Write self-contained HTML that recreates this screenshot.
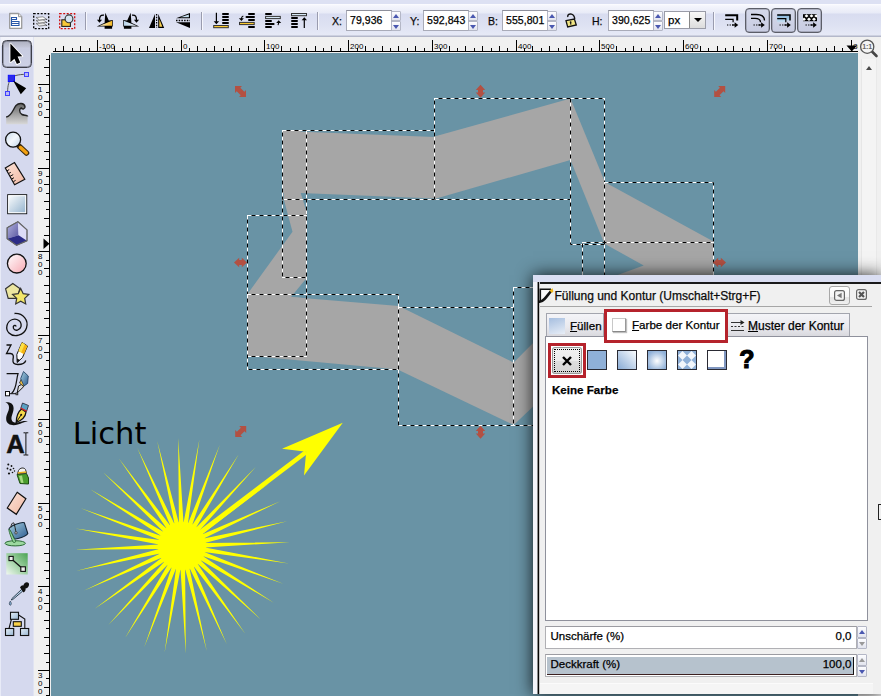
<!DOCTYPE html>
<html><head><meta charset="utf-8"><title>Inkscape</title>
<style>
html,body{margin:0;padding:0}
body{width:881px;height:696px;position:relative;overflow:hidden;background:#f0f0f0;font-family:"Liberation Sans",sans-serif;font-size:11px;color:#000;-webkit-text-stroke:.25px #000}
body>*{position:absolute}
#cv{left:0;top:0}
#topstrip{left:0;top:0;width:881px;height:4px;background:#dde1f3}
#toolbar{left:0;top:4px;width:881px;height:33px;background:linear-gradient(#fdfdff 0,#f4f5fc 2px,#e8ebf7 9px,#d8dcf0 10px,#dde1f2 20px,#e6e9f6 31px,#b4b8ca 32px,#b4b8ca 33px)}
.sep{top:12px;width:1px;height:18px;background:#9a9cae;box-shadow:1px 0 0 #f6f7fd}
.tlabel{top:12px;height:18px;line-height:18px;font-size:10.5px;color:#111}
.entry{top:10px;width:43px;height:19px;line-height:19px;border:1px solid #a9abb8;border-top-color:#8e909c;background:#fff;font-size:10.5px;padding-left:3px;box-sizing:content-box;width:41px;letter-spacing:0.05px}
.spin{border:0}
.spin i{position:absolute;left:0;width:100%;height:50%;box-sizing:border-box;border:1px solid #b4b7c6;background:linear-gradient(#fdfdff,#e2e4ee);border-radius:1px}
.spin i.up{top:0}.spin i.dn{bottom:0}
.spin i:after{content:"";position:absolute;left:50%;top:50%;margin-left:-3px;border:3px solid transparent}
.spin i.up:after{border-bottom:4px solid #4a58b0;margin-top:-5px}
.spin i.dn:after{border-top:4px solid #4a58b0;margin-top:-1px}
.combo{left:664px;top:11px;width:42px;height:18px;border:1px solid #9a9ca8;background:#fff;box-sizing:border-box}
.combo span{position:absolute;left:3px;top:0;line-height:16px;font-size:11.5px}
.combo b{position:absolute;right:0;top:0;width:15px;height:16px;background:linear-gradient(#f8f8f8,#dcdcdc);border-left:1px solid #888}
.combo b:after{content:"";position:absolute;left:4px;top:6px;border:4px solid transparent;border-top:4px solid #000;border-bottom:0}
.tbtn{top:8px;width:25px;height:25px;border:1px solid #5c5e68;box-shadow:inset 0 0 0 .5px rgba(60,60,70,.5);border-radius:4px;background:linear-gradient(#d4d8ea,#c9cde2);box-sizing:border-box}
#toolbox{left:0;top:37px;width:34px;height:659px;background:linear-gradient(#f4f5fb 0,#eceef8 9px,#d5d9ee 9.5px);box-shadow:inset 1px 0 0 #e8ebf7,inset -1px 0 0 #e0e3f2}
#selbtn{left:2px;top:40px;width:30px;height:28px;box-sizing:border-box;border:1px solid #3e3f48;box-shadow:inset 0 0 0 1px rgba(70,72,84,.4);border-radius:4.5px;background:linear-gradient(#adb0c0 0,#c2c5d6 6px,#c8cce0 7px,#cdd1e5 100%)}
#vscroll{left:858px;top:57px;width:23px;height:220px;background:#f0f0f0}
#vscroll:before{content:"";position:absolute;left:4px;top:2px;width:14px;height:218px;background:#f4f4f4;box-shadow:-1px 0 0 #e6e6e6,1px 0 0 #e9e9e9}
#vscroll i{position:absolute;left:7.5px;top:8.5px;border:3.5px solid transparent;border-bottom:4px solid #4a4a4a;border-top:0}
#zoom11{left:858px;top:37px}
/* dialog */
#dshadow{left:533px;top:275px;width:348px;height:419px;box-shadow:0 0 16px 0 rgba(0,0,0,.85)}
#dlg{left:533px;top:275px;width:348px;height:419px;background:#f0f0f0;overflow:hidden;font-size:12px}
#dlg>*{position:absolute}
#dtop{left:0;top:0;width:348px;height:7px;background:#dadef2}
#dline{left:5px;top:7px;width:343px;height:2px;background:#1a1a1a}
#dleft{left:0;top:7px;width:5px;height:412px;background:#f3f4fa}
#dvline{left:4px;top:7px;width:3px;height:412px;background:linear-gradient(90deg,#8c8c8c 0,#8c8c8c 33.3%,#050505 33.3%,#050505 66.6%,#c4c4c4 66.6%)}
#dicon{left:6px;top:12.5px}
#dtitle{left:21.5px;top:11.5px;height:18px;line-height:18px;font-size:12px;white-space:nowrap;color:#111}
#dcollapse{left:296px;top:10.500px;width:21px;height:19px;box-sizing:border-box;border:1px solid #a8a8a8;border-radius:3px;background:linear-gradient(#fff,#f6f6f6 60%,#e4e4e4 62%,#f0f0f0)}
#dcollapse svg{position:absolute;left:4px;top:3px}
#dclose{left:323px;top:14px}
#dunder{left:7px;top:31px;width:332px;height:1px;background:#a6a6a6}
#tab1,#tab3{top:38px;height:23px;box-sizing:border-box;border:1px solid #a3a5ae;border-bottom:0;background:linear-gradient(#f4f4f8,#e9e9ee 60%,#d9d9de);font-size:11.6px;white-space:nowrap}
#tab1{left:13px;width:58px}
#tab3{left:194px;width:123px}
#tab1 span,#tab3 span,#tab2 span{position:absolute;top:4px;line-height:16px}
#tab1 span{left:23px}
#tab1 i{position:absolute;left:2px;top:3.5px;width:16px;height:16px;background:linear-gradient(160deg,#a6bedf,#e8eef7)}
#tab3 svg{position:absolute;left:2px;top:5px}
#tab3 span{left:20px;font-size:12px}
#panel{left:11.500px;top:61px;width:323px;height:285px;box-sizing:border-box;border:1px solid #8f919c;background:#fff}
#tab2{left:70.500px;top:33.500px;width:124px;height:34.500px;box-sizing:border-box;border:3px solid #b5232c;background:#fff;font-size:11.6px;white-space:nowrap}
#tab2 span{left:25.5px;top:5.5px}
#tab2 i{position:absolute;left:5px;top:6px;width:14px;height:14px;background:#fff;border:1px solid #c8c8c8;border-right-color:#999;border-bottom-color:#888;box-sizing:border-box;box-shadow:1px 1px 1px rgba(0,0,0,.25)}
#xbox{left:14.500px;top:67.500px;width:38.500px;height:35px;box-sizing:border-box;border:3px solid #b5232c;background:#fff}
#xbtn{position:absolute;left:1px;top:1px;width:30.5px;height:27px;border-radius:3px;background:linear-gradient(#f2f2f2,#ebebeb 50%,#dedede 52%,#d4d4d4);box-shadow:0 0 0 1px #9a9a9a inset}
#xfocus{position:absolute;left:2px;top:2px;right:2px;bottom:2px;border:1px dotted #000}
#xbtn svg{position:absolute;left:9.500px;top:8px}
.sw{top:75px;width:20px;height:20px;box-sizing:border-box;border:1px solid #2a2a33}
#qm{left:205px;top:69px;width:18px;height:30px;line-height:30px;font-size:25px;font-weight:bold;text-align:center;font-family:"Liberation Sans",sans-serif;-webkit-text-stroke:1.1px #000}
#keine{left:19px;top:107px;line-height:16px;font-size:11.6px;font-weight:bold;white-space:nowrap}
.sbox{left:11.500px;width:312px;height:23px;box-sizing:border-box;border:1px solid #b0b0b4;border-top-color:#9c9ca2;background:#fff;font-size:11.5px}
.sbox span{position:absolute;left:5px;top:1px;line-height:16px;white-space:nowrap}
.sbox em{position:absolute;right:4px;top:1px;line-height:16px;font-style:normal}
#dfill{position:absolute;left:1px;top:1.500px;width:306px;height:17px;background:#b6c2cd;border-bottom:1.5px solid #3a1f1f;border-right:1.5px solid #111}
.spin i.g:after{border-top-color:#999;border-bottom-color:#999}
.spin i.up.g:after{border-top-color:transparent}
.spin i.dn.g:after{border-bottom-color:transparent}
#dbot{left:6.500px;top:408px;width:333px;height:11px;background:#f5f5f5;border-top:1px solid #fbfbfb}
#brk{left:878px;top:504px;width:5px;height:16px;box-sizing:border-box;border:1.5px solid #222;border-right:0;border-radius:1px 0 0 1px}

</style></head>
<body>
<svg id="cv" width="881" height="696" viewBox="0 0 881 696">
<rect x="51" y="53" width="807" height="643" fill="#6993a5"/>
<polygon points="283,131 300.7,131 300.7,193 306,210 306,278.7 291,297 247.5,294 292.5,231.7 283.7,199" fill="#a6a6a6"/>
<polygon points="283,131 434.5,137 434.5,198.5 300.7,193 283,193" fill="#a6a6a6"/>
<polygon points="434.5,136.5 570.5,98.5 570.5,160 434.5,199" fill="#a6a6a6"/>
<polygon points="570.5,98.5 604.5,181 604.5,244 570.5,160" fill="#a6a6a6"/>
<polygon points="604.5,182 713.5,241.5 713.5,300 620,300 617.5,275 643.7,265.5 604.5,243.7" fill="#a6a6a6"/>
<polygon points="247.5,294.5 289,294.5 291,297 306.5,298.3 306.5,356.5 247.5,356.5" fill="#a6a6a6"/>
<polygon points="291,297 398.7,306 398.7,369.5 262,357 262,297" fill="#a6a6a6"/>
<polygon points="398.7,306 513.7,362.5 513.7,425 398.7,370" fill="#a6a6a6"/>
<polygon points="513.7,362.5 560,316 560,381 513.7,425" fill="#a6a6a6"/>
<rect x="282.5" y="130.5" width="24.0" height="147.0" fill="none" stroke="#fff" stroke-width="1"/><rect x="282.5" y="130.5" width="24.0" height="147.0" fill="none" stroke="#000" stroke-width="1" stroke-dasharray="4 4" stroke-dashoffset="4"/>
<rect x="282.5" y="130.5" width="152.0" height="69.0" fill="none" stroke="#fff" stroke-width="1"/><rect x="282.5" y="130.5" width="152.0" height="69.0" fill="none" stroke="#000" stroke-width="1" stroke-dasharray="4 4" stroke-dashoffset="4"/>
<rect x="434.5" y="98.5" width="136.0" height="101.0" fill="none" stroke="#fff" stroke-width="1"/><rect x="434.5" y="98.5" width="136.0" height="101.0" fill="none" stroke="#000" stroke-width="1" stroke-dasharray="4 4" stroke-dashoffset="4"/>
<rect x="570.5" y="98.5" width="34.0" height="146.0" fill="none" stroke="#fff" stroke-width="1"/><rect x="570.5" y="98.5" width="34.0" height="146.0" fill="none" stroke="#000" stroke-width="1" stroke-dasharray="4 4" stroke-dashoffset="4"/>
<rect x="604.5" y="182.5" width="109.0" height="60.0" fill="none" stroke="#fff" stroke-width="1"/><rect x="604.5" y="182.5" width="109.0" height="60.0" fill="none" stroke="#000" stroke-width="1" stroke-dasharray="4 4" stroke-dashoffset="4"/>
<rect x="582.5" y="242.5" width="22.0" height="57.5" fill="none" stroke="#fff" stroke-width="1"/><rect x="582.5" y="242.5" width="22.0" height="57.5" fill="none" stroke="#000" stroke-width="1" stroke-dasharray="4 4" stroke-dashoffset="4"/>
<rect x="582.5" y="242.5" width="131.0" height="57.5" fill="none" stroke="#fff" stroke-width="1"/><rect x="582.5" y="242.5" width="131.0" height="57.5" fill="none" stroke="#000" stroke-width="1" stroke-dasharray="4 4" stroke-dashoffset="4"/>
<rect x="247.5" y="215.5" width="59.0" height="79.0" fill="none" stroke="#fff" stroke-width="1"/><rect x="247.5" y="215.5" width="59.0" height="79.0" fill="none" stroke="#000" stroke-width="1" stroke-dasharray="4 4" stroke-dashoffset="4"/>
<rect x="247.5" y="294.5" width="59.0" height="62.0" fill="none" stroke="#fff" stroke-width="1"/><rect x="247.5" y="294.5" width="59.0" height="62.0" fill="none" stroke="#000" stroke-width="1" stroke-dasharray="4 4" stroke-dashoffset="4"/>
<rect x="247.5" y="294.5" width="151.0" height="75.0" fill="none" stroke="#fff" stroke-width="1"/><rect x="247.5" y="294.5" width="151.0" height="75.0" fill="none" stroke="#000" stroke-width="1" stroke-dasharray="4 4" stroke-dashoffset="4"/>
<rect x="398.5" y="307.5" width="115.0" height="118.0" fill="none" stroke="#fff" stroke-width="1"/><rect x="398.5" y="307.5" width="115.0" height="118.0" fill="none" stroke="#000" stroke-width="1" stroke-dasharray="4 4" stroke-dashoffset="4"/>
<rect x="513.5" y="287.5" width="200.0" height="138.0" fill="none" stroke="#fff" stroke-width="1"/><rect x="513.5" y="287.5" width="200.0" height="138.0" fill="none" stroke="#000" stroke-width="1" stroke-dasharray="4 4" stroke-dashoffset="4"/>
<polygon points="289.9,542.2 204.8,542.9 287.1,521.2 203.8,538.6 280.3,501.2 201.9,534.5 269.6,482.9 199.3,530.8 255.7,467.0 196.0,527.7 238.8,454.2 192.1,525.3 219.8,444.8 187.9,523.8 199.4,439.4 183.5,523.0 178.2,438.1 178.9,523.2 157.2,440.9 174.6,524.2 137.2,447.7 170.5,526.1 118.9,458.4 166.8,528.7 103.0,472.3 163.7,532.0 90.2,489.2 161.3,535.9 80.8,508.2 159.8,540.1 75.4,528.6 159.0,544.5 74.1,549.8 159.2,549.1 76.9,570.8 160.2,553.4 83.7,590.8 162.1,557.5 94.4,609.1 164.7,561.2 108.3,625.0 168.0,564.3 125.2,637.8 171.9,566.7 144.2,647.2 176.1,568.2 164.6,652.6 180.5,569.0 185.8,653.9 185.1,568.8 206.8,651.1 189.4,567.8 226.8,644.3 193.5,565.9 245.1,633.6 197.2,563.3 261.0,619.7 200.3,560.0 273.8,602.8 202.7,556.1 283.2,583.8 204.2,551.9 288.6,563.4 205.0,547.5" fill="#ffff00"/>
<circle cx="182" cy="546" r="24" fill="#ffff00"/>
<polygon points="342.8,422.8 282,448.8 306.2,451.7 304,475.5" fill="#ffff00"/>
<polygon points="304.8,450.3 307.6,453.8 183.6,548.2 180.8,544.2" fill="#ffff00"/>
<text x="72.7" y="443.5" font-family="DejaVu Sans, Liberation Sans, sans-serif" font-size="30.6" fill="#000">Licht</text>
<path d="M-5.5 -5.5H1.5L-0.2 -3.8L3.8 0.2L5.5 -1.5V5.5H-1.5L0.2 3.8L-3.8 -0.2L-5.5 1.5Z" transform="translate(240.5 91.5) rotate(0)" fill="#b35042"/>
<path d="M-6.5 0L-1.3 -4.7V-2.5H1.3V-4.7L6.5 0L1.3 4.7V2.5H-1.3V4.7Z" transform="translate(480.5 91.25) rotate(90)" fill="#b35042"/>
<path d="M-5.5 -5.5H1.5L-0.2 -3.8L3.8 0.2L5.5 -1.5V5.5H-1.5L0.2 3.8L-3.8 -0.2L-5.5 1.5Z" transform="translate(719.7 91.5) rotate(90)" fill="#b35042"/>
<path d="M-6.5 0L-1.3 -4.7V-2.5H1.3V-4.7L6.5 0L1.3 4.7V2.5H-1.3V4.7Z" transform="translate(240.5 262.5) rotate(0)" fill="#b35042"/>
<path d="M-6.5 0L-1.3 -4.7V-2.5H1.3V-4.7L6.5 0L1.3 4.7V2.5H-1.3V4.7Z" transform="translate(719.5 262.5) rotate(0)" fill="#b35042"/>
<path d="M-5.5 -5.5H1.5L-0.2 -3.8L3.8 0.2L5.5 -1.5V5.5H-1.5L0.2 3.8L-3.8 -0.2L-5.5 1.5Z" transform="translate(240.7 431.5) rotate(90)" fill="#b35042"/>
<path d="M-6.5 0L-1.3 -4.7V-2.5H1.3V-4.7L6.5 0L1.3 4.7V2.5H-1.3V4.7Z" transform="translate(480.5 432.2) rotate(90)" fill="#b35042"/>
<g stroke="#000" stroke-width="1" shape-rendering="crispEdges">
<line x1="53" y1="51.5" x2="858" y2="51.5"/>
<line x1="55.5" y1="48" x2="55.5" y2="51"/>
<line x1="63.5" y1="46" x2="63.5" y2="51"/>
<line x1="72.5" y1="48" x2="72.5" y2="51"/>
<line x1="80.5" y1="46" x2="80.5" y2="51"/>
<line x1="89.5" y1="48" x2="89.5" y2="51"/>
<line x1="97.5" y1="40" x2="97.5" y2="51"/>
<line x1="105.5" y1="48" x2="105.5" y2="51"/>
<line x1="114.5" y1="46" x2="114.5" y2="51"/>
<line x1="122.5" y1="48" x2="122.5" y2="51"/>
<line x1="130.5" y1="46" x2="130.5" y2="51"/>
<line x1="139.5" y1="48" x2="139.5" y2="51"/>
<line x1="147.5" y1="46" x2="147.5" y2="51"/>
<line x1="156.5" y1="48" x2="156.5" y2="51"/>
<line x1="164.5" y1="46" x2="164.5" y2="51"/>
<line x1="172.5" y1="48" x2="172.5" y2="51"/>
<line x1="181.5" y1="40" x2="181.5" y2="51"/>
<line x1="189.5" y1="48" x2="189.5" y2="51"/>
<line x1="197.5" y1="46" x2="197.5" y2="51"/>
<line x1="206.5" y1="48" x2="206.5" y2="51"/>
<line x1="214.5" y1="46" x2="214.5" y2="51"/>
<line x1="223.5" y1="48" x2="223.5" y2="51"/>
<line x1="231.5" y1="46" x2="231.5" y2="51"/>
<line x1="239.5" y1="48" x2="239.5" y2="51"/>
<line x1="248.5" y1="46" x2="248.5" y2="51"/>
<line x1="256.5" y1="48" x2="256.5" y2="51"/>
<line x1="264.5" y1="40" x2="264.5" y2="51"/>
<line x1="273.5" y1="48" x2="273.5" y2="51"/>
<line x1="281.5" y1="46" x2="281.5" y2="51"/>
<line x1="290.5" y1="48" x2="290.5" y2="51"/>
<line x1="298.5" y1="46" x2="298.5" y2="51"/>
<line x1="306.5" y1="48" x2="306.5" y2="51"/>
<line x1="315.5" y1="46" x2="315.5" y2="51"/>
<line x1="323.5" y1="48" x2="323.5" y2="51"/>
<line x1="331.5" y1="46" x2="331.5" y2="51"/>
<line x1="340.5" y1="48" x2="340.5" y2="51"/>
<line x1="348.5" y1="40" x2="348.5" y2="51"/>
<line x1="357.5" y1="48" x2="357.5" y2="51"/>
<line x1="365.5" y1="46" x2="365.5" y2="51"/>
<line x1="373.5" y1="48" x2="373.5" y2="51"/>
<line x1="382.5" y1="46" x2="382.5" y2="51"/>
<line x1="390.5" y1="48" x2="390.5" y2="51"/>
<line x1="398.5" y1="46" x2="398.5" y2="51"/>
<line x1="407.5" y1="48" x2="407.5" y2="51"/>
<line x1="415.5" y1="46" x2="415.5" y2="51"/>
<line x1="424.5" y1="48" x2="424.5" y2="51"/>
<line x1="432.5" y1="40" x2="432.5" y2="51"/>
<line x1="440.5" y1="48" x2="440.5" y2="51"/>
<line x1="449.5" y1="46" x2="449.5" y2="51"/>
<line x1="457.5" y1="48" x2="457.5" y2="51"/>
<line x1="465.5" y1="46" x2="465.5" y2="51"/>
<line x1="474.5" y1="48" x2="474.5" y2="51"/>
<line x1="482.5" y1="46" x2="482.5" y2="51"/>
<line x1="491.5" y1="48" x2="491.5" y2="51"/>
<line x1="499.5" y1="46" x2="499.5" y2="51"/>
<line x1="507.5" y1="48" x2="507.5" y2="51"/>
<line x1="516.5" y1="40" x2="516.5" y2="51"/>
<line x1="524.5" y1="48" x2="524.5" y2="51"/>
<line x1="532.5" y1="46" x2="532.5" y2="51"/>
<line x1="541.5" y1="48" x2="541.5" y2="51"/>
<line x1="549.5" y1="46" x2="549.5" y2="51"/>
<line x1="558.5" y1="48" x2="558.5" y2="51"/>
<line x1="566.5" y1="46" x2="566.5" y2="51"/>
<line x1="574.5" y1="48" x2="574.5" y2="51"/>
<line x1="583.5" y1="46" x2="583.5" y2="51"/>
<line x1="591.5" y1="48" x2="591.5" y2="51"/>
<line x1="599.5" y1="40" x2="599.5" y2="51"/>
<line x1="608.5" y1="48" x2="608.5" y2="51"/>
<line x1="616.5" y1="46" x2="616.5" y2="51"/>
<line x1="625.5" y1="48" x2="625.5" y2="51"/>
<line x1="633.5" y1="46" x2="633.5" y2="51"/>
<line x1="641.5" y1="48" x2="641.5" y2="51"/>
<line x1="650.5" y1="46" x2="650.5" y2="51"/>
<line x1="658.5" y1="48" x2="658.5" y2="51"/>
<line x1="666.5" y1="46" x2="666.5" y2="51"/>
<line x1="675.5" y1="48" x2="675.5" y2="51"/>
<line x1="683.5" y1="40" x2="683.5" y2="51"/>
<line x1="692.5" y1="48" x2="692.5" y2="51"/>
<line x1="700.5" y1="46" x2="700.5" y2="51"/>
<line x1="708.5" y1="48" x2="708.5" y2="51"/>
<line x1="717.5" y1="46" x2="717.5" y2="51"/>
<line x1="725.5" y1="48" x2="725.5" y2="51"/>
<line x1="733.5" y1="46" x2="733.5" y2="51"/>
<line x1="742.5" y1="48" x2="742.5" y2="51"/>
<line x1="750.5" y1="46" x2="750.5" y2="51"/>
<line x1="759.5" y1="48" x2="759.5" y2="51"/>
<line x1="767.5" y1="40" x2="767.5" y2="51"/>
<line x1="775.5" y1="48" x2="775.5" y2="51"/>
<line x1="784.5" y1="46" x2="784.5" y2="51"/>
<line x1="792.5" y1="48" x2="792.5" y2="51"/>
<line x1="800.5" y1="46" x2="800.5" y2="51"/>
<line x1="809.5" y1="48" x2="809.5" y2="51"/>
<line x1="817.5" y1="46" x2="817.5" y2="51"/>
<line x1="826.5" y1="48" x2="826.5" y2="51"/>
<line x1="834.5" y1="46" x2="834.5" y2="51"/>
<line x1="842.5" y1="48" x2="842.5" y2="51"/>
<line x1="851.5" y1="40" x2="851.5" y2="51"/>
<line x1="49.5" y1="55" x2="49.5" y2="696"/>
<line x1="46" y1="59.5" x2="49" y2="59.5"/>
<line x1="44" y1="67.5" x2="49" y2="67.5"/>
<line x1="46" y1="75.5" x2="49" y2="75.5"/>
<line x1="38" y1="84.5" x2="49" y2="84.5"/>
<line x1="46" y1="92.5" x2="49" y2="92.5"/>
<line x1="44" y1="101.5" x2="49" y2="101.5"/>
<line x1="46" y1="109.5" x2="49" y2="109.5"/>
<line x1="44" y1="117.5" x2="49" y2="117.5"/>
<line x1="46" y1="126.5" x2="49" y2="126.5"/>
<line x1="44" y1="134.5" x2="49" y2="134.5"/>
<line x1="46" y1="142.5" x2="49" y2="142.5"/>
<line x1="44" y1="151.5" x2="49" y2="151.5"/>
<line x1="46" y1="159.5" x2="49" y2="159.5"/>
<line x1="38" y1="168.5" x2="49" y2="168.5"/>
<line x1="46" y1="176.5" x2="49" y2="176.5"/>
<line x1="44" y1="184.5" x2="49" y2="184.5"/>
<line x1="46" y1="193.5" x2="49" y2="193.5"/>
<line x1="44" y1="201.5" x2="49" y2="201.5"/>
<line x1="46" y1="209.5" x2="49" y2="209.5"/>
<line x1="44" y1="218.5" x2="49" y2="218.5"/>
<line x1="46" y1="226.5" x2="49" y2="226.5"/>
<line x1="44" y1="235.5" x2="49" y2="235.5"/>
<line x1="46" y1="243.5" x2="49" y2="243.5"/>
<line x1="38" y1="251.5" x2="49" y2="251.5"/>
<line x1="46" y1="260.5" x2="49" y2="260.5"/>
<line x1="44" y1="268.5" x2="49" y2="268.5"/>
<line x1="46" y1="276.5" x2="49" y2="276.5"/>
<line x1="44" y1="285.5" x2="49" y2="285.5"/>
<line x1="46" y1="293.5" x2="49" y2="293.5"/>
<line x1="44" y1="302.5" x2="49" y2="302.5"/>
<line x1="46" y1="310.5" x2="49" y2="310.5"/>
<line x1="44" y1="318.5" x2="49" y2="318.5"/>
<line x1="46" y1="327.5" x2="49" y2="327.5"/>
<line x1="38" y1="335.5" x2="49" y2="335.5"/>
<line x1="46" y1="343.5" x2="49" y2="343.5"/>
<line x1="44" y1="352.5" x2="49" y2="352.5"/>
<line x1="46" y1="360.5" x2="49" y2="360.5"/>
<line x1="44" y1="369.5" x2="49" y2="369.5"/>
<line x1="46" y1="377.5" x2="49" y2="377.5"/>
<line x1="44" y1="385.5" x2="49" y2="385.5"/>
<line x1="46" y1="394.5" x2="49" y2="394.5"/>
<line x1="44" y1="402.5" x2="49" y2="402.5"/>
<line x1="46" y1="410.5" x2="49" y2="410.5"/>
<line x1="38" y1="419.5" x2="49" y2="419.5"/>
<line x1="46" y1="427.5" x2="49" y2="427.5"/>
<line x1="44" y1="436.5" x2="49" y2="436.5"/>
<line x1="46" y1="444.5" x2="49" y2="444.5"/>
<line x1="44" y1="452.5" x2="49" y2="452.5"/>
<line x1="46" y1="461.5" x2="49" y2="461.5"/>
<line x1="44" y1="469.5" x2="49" y2="469.5"/>
<line x1="46" y1="477.5" x2="49" y2="477.5"/>
<line x1="44" y1="486.5" x2="49" y2="486.5"/>
<line x1="46" y1="494.5" x2="49" y2="494.5"/>
<line x1="38" y1="503.5" x2="49" y2="503.5"/>
<line x1="46" y1="511.5" x2="49" y2="511.5"/>
<line x1="44" y1="519.5" x2="49" y2="519.5"/>
<line x1="46" y1="528.5" x2="49" y2="528.5"/>
<line x1="44" y1="536.5" x2="49" y2="536.5"/>
<line x1="46" y1="544.5" x2="49" y2="544.5"/>
<line x1="44" y1="553.5" x2="49" y2="553.5"/>
<line x1="46" y1="561.5" x2="49" y2="561.5"/>
<line x1="44" y1="570.5" x2="49" y2="570.5"/>
<line x1="46" y1="578.5" x2="49" y2="578.5"/>
<line x1="38" y1="586.5" x2="49" y2="586.5"/>
<line x1="46" y1="595.5" x2="49" y2="595.5"/>
<line x1="44" y1="603.5" x2="49" y2="603.5"/>
<line x1="46" y1="611.5" x2="49" y2="611.5"/>
<line x1="44" y1="620.5" x2="49" y2="620.5"/>
<line x1="46" y1="628.5" x2="49" y2="628.5"/>
<line x1="44" y1="637.5" x2="49" y2="637.5"/>
<line x1="46" y1="645.5" x2="49" y2="645.5"/>
<line x1="44" y1="653.5" x2="49" y2="653.5"/>
<line x1="46" y1="662.5" x2="49" y2="662.5"/>
<line x1="38" y1="670.5" x2="49" y2="670.5"/>
<line x1="46" y1="678.5" x2="49" y2="678.5"/>
<line x1="44" y1="687.5" x2="49" y2="687.5"/>
<line x1="46" y1="695.5" x2="49" y2="695.5"/>
</g>
<clipPath id="rc"><rect x="34" y="37" width="824" height="660"/></clipPath><g font-family="Liberation Sans, sans-serif" font-size="8" fill="#000" clip-path="url(#rc)">
<text x="99" y="48.5">-100</text>
<text x="183" y="48.5">0</text>
<text x="266" y="48.5">100</text>
<text x="350" y="48.5">200</text>
<text x="434" y="48.5">300</text>
<text x="518" y="48.5">400</text>
<text x="601" y="48.5">500</text>
<text x="685" y="48.5">600</text>
<text x="769" y="48.5">700</text>
<text x="853" y="48.5">800</text>
<text x="40.2" y="92" text-anchor="middle">1</text>
<text x="40.2" y="100" text-anchor="middle">0</text>
<text x="40.2" y="108" text-anchor="middle">0</text>
<text x="40.2" y="116" text-anchor="middle">0</text>
<text x="40.2" y="176" text-anchor="middle">9</text>
<text x="40.2" y="184" text-anchor="middle">0</text>
<text x="40.2" y="192" text-anchor="middle">0</text>
<text x="40.2" y="259" text-anchor="middle">8</text>
<text x="40.2" y="267" text-anchor="middle">0</text>
<text x="40.2" y="275" text-anchor="middle">0</text>
<text x="40.2" y="343" text-anchor="middle">7</text>
<text x="40.2" y="351" text-anchor="middle">0</text>
<text x="40.2" y="359" text-anchor="middle">0</text>
<text x="40.2" y="427" text-anchor="middle">6</text>
<text x="40.2" y="435" text-anchor="middle">0</text>
<text x="40.2" y="443" text-anchor="middle">0</text>
<text x="40.2" y="511" text-anchor="middle">5</text>
<text x="40.2" y="519" text-anchor="middle">0</text>
<text x="40.2" y="527" text-anchor="middle">0</text>
<text x="40.2" y="594" text-anchor="middle">4</text>
<text x="40.2" y="602" text-anchor="middle">0</text>
<text x="40.2" y="610" text-anchor="middle">0</text>
<text x="40.2" y="678" text-anchor="middle">3</text>
<text x="40.2" y="686" text-anchor="middle">0</text>
<text x="40.2" y="694" text-anchor="middle">0</text>
</g>
<path d="M846.5 45.5h10.5l-5.25 6z" fill="#000"/>
<path d="M43.5 238.5v10.5l6-5.25z" fill="#000"/>
</svg>
<div id="topstrip"></div><div id="toolbar"></div>
<div class="sep" style="left:85px"></div>
<div class="sep" style="left:201px"></div>
<div class="sep" style="left:317px"></div>
<div class="sep" style="left:713px"></div>
<div class="tlabel" style="left:332px">X:</div>
<div class="entry" style="left:346px">79,936</div>
<div class="spin" style="left:391px;top:11px;width:10px;height:20px"><i class="up"></i><i class="dn"></i></div>
<div class="tlabel" style="left:410px">Y:</div>
<div class="entry" style="left:423px">592,843</div>
<div class="spin" style="left:468px;top:11px;width:10px;height:20px"><i class="up"></i><i class="dn"></i></div>
<div class="tlabel" style="left:488px">B:</div>
<div class="entry" style="left:502px">555,801</div>
<div class="spin" style="left:547px;top:11px;width:10px;height:20px"><i class="up"></i><i class="dn"></i></div>
<div class="tlabel" style="left:592px">H:</div>
<div class="entry" style="left:608px">390,625</div>
<div class="spin" style="left:653px;top:11px;width:10px;height:20px"><i class="up"></i><i class="dn"></i></div>
<div class="combo"><span>px</span><b></b></div>
<div class="tbtn" style="left:745px"></div>
<div class="tbtn" style="left:771px"></div>
<div class="tbtn" style="left:797px"></div>
<svg id="topicons" width="881" height="40" viewBox="0 0 881 40" style="left:0;top:0">
<defs>
<linearGradient id="tY" x1="0" y1="0" x2="1" y2="0"><stop offset="0" stop-color="#fff8e0"/><stop offset="1" stop-color="#f4b820"/></linearGradient>
<linearGradient id="tBl" x1="0" y1="0" x2="1" y2="0"><stop offset="0" stop-color="#b8d4ea"/><stop offset="1" stop-color="#f4f8fc"/></linearGradient>
<linearGradient id="tBl2" x1="0" y1="0" x2="0" y2="1"><stop offset="0" stop-color="#7fb0d8"/><stop offset="1" stop-color="#c8e0f2"/></linearGradient>
</defs>
<!-- new doc -->
<path d="M9.700 13.500H18.500L21.700 16.700V28.300H9.700Z" fill="#fff" stroke="#9a9a9a" stroke-width="1.300" stroke-linejoin="round"/>
<path d="M18.500 13.500V16.700H21.700" fill="#eee" stroke="#9a9a9a" stroke-width="1"/>
<path d="M11.500 17.500H16.500V19.500H11.500ZM11.500 19.500V25.500H19V21.500H16.500M11.500 21.500H19M11.500 23.500H19" fill="none" stroke="#2858a8" stroke-width="1.100"/>
<!-- layers dashed -->
<rect x="33.700" y="13.700" width="15" height="15" fill="none" stroke="#000" stroke-width="1.300" stroke-dasharray="2 1.500"/>
<g stroke="#666" stroke-width=".7"><path d="M36 23.500L43 22.800L46.500 25.200L39.500 26Z" fill="#e8e8e8"/><path d="M36 20.500L43 19.800L46.500 22.200L39.500 23Z" fill="#f4f4f4"/><path d="M36 17.500L43 16.800L46.500 19.200L39.500 20Z" fill="#fff"/></g>
<path d="M46.500 19.200V20M46.500 22.200V23M46.500 25.200V26" stroke="#333" stroke-width="1.200"/>
<!-- zoom sel dashed red -->
<rect x="59.700" y="13.700" width="15" height="15" fill="none" stroke="#d01010" stroke-width="1.300" stroke-dasharray="2 1.500"/>
<rect x="61.800" y="19.800" width="8.600" height="6.600" fill="#f8c838" stroke="#222" stroke-width="1.100"/>
<circle cx="69" cy="18.800" r="3.900" fill="#d4e4f0" stroke="#333" stroke-width="1.100"/>
<!-- rotate ccw -->
<path d="M105.300 12.800L108.800 20.500L112.800 19.900V26.400H112.100V28.800H104.600V26.400H96.800L104.600 22.800Z" fill="#000"/>
<path d="M99.500 25.800L112.100 20.800V25.800Z" fill="url(#tY)"/>
<path d="M104 15.200C100.500 14.800 99.500 16.500 99.500 20.500" fill="none" stroke="#000" stroke-width="1.300"/>
<path d="M96.900 19.800H102.100L99.500 22.800Z" fill="#000"/>
<!-- rotate cw -->
<path d="M130.700 12.800L127.200 20.500L123.200 19.900V26.400H123.900V28.800H131.400V26.400H139.200L131.400 22.800Z" fill="#000"/>
<path d="M136.500 25.800L123.900 20.800V25.800Z" fill="url(#tBl)"/>
<path d="M132 15.200C135.500 14.800 136.500 16.500 136.500 20.500" fill="none" stroke="#000" stroke-width="1.300"/>
<path d="M133.900 19.800H139.100L136.500 22.800Z" fill="#000"/>
<!-- flip h -->
<path d="M149 27.900L155 14V27.900Z" fill="#000"/>
<path d="M156.600 14V28" stroke="#000" stroke-width="1.300" stroke-dasharray="1.500 1.200"/>
<path d="M158.200 14L164.200 27.900H158.200Z" fill="#000"/>
<path d="M159.300 19L162.400 26.800H159.300Z" fill="#f8d050"/>
<!-- flip v -->
<path d="M176 18.300L190 13.100V18.300Z" fill="#000"/>
<path d="M180.500 17.300L188.900 14.600V17.300Z" fill="#c8e0f0"/>
<path d="M176 20.500H190" stroke="#000" stroke-width="1.300" stroke-dasharray="1.500 1.200"/>
<path d="M176 22.300H190V27.900Z" fill="#000"/>
<!-- lower to bottom -->
<g stroke="#000" stroke-width="2" stroke-linecap="round"><path d="M223 14H228M223 17H228M223 20H228M223 23H228"/></g>
<path d="M216.400 12.800V22" stroke="#000" stroke-width="1.200"/><path d="M213.700 21.200H219.100L216.400 24.200Z" fill="#000"/>
<rect x="213.700" y="25.500" width="14.600" height="2.200" fill="#f8c830" stroke="#333" stroke-width="1"/>
<!-- lower one -->
<g stroke="#000" stroke-width="2" stroke-linecap="round"><path d="M249 14H254M246.500 17H254M249 20H254M249 27H254"/></g>
<rect x="239.500" y="22.400" width="14.700" height="2.200" fill="#f8c830" stroke="#333" stroke-width="1"/>
<path d="M243.300 16C241.800 16.500 241.400 17.500 241.400 19" fill="none" stroke="#000" stroke-width="1.100"/><path d="M238.900 18.300H243.900L241.400 21Z" fill="#000"/>
<!-- raise one -->
<g stroke="#000" stroke-width="2" stroke-linecap="round"><path d="M266 14H271M266 21H271M266 24H273.600M266 27H271"/></g>
<rect x="265.600" y="16.400" width="14.700" height="2.200" fill="#d4e6f4" stroke="#333" stroke-width="1"/>
<path d="M277.800 25C278.600 24.500 278.700 23.800 278.700 22.500" fill="none" stroke="#000" stroke-width="1.100"/><path d="M276.200 23H281.200L278.700 20.300Z" fill="#000"/>
<!-- raise to top -->
<g stroke="#000" stroke-width="2" stroke-linecap="round"><path d="M292 18H297M292 21H297M292 24H297M292 27H297"/></g>
<rect x="291.500" y="13.500" width="15" height="2.200" fill="#d4e6f4" stroke="#333" stroke-width="1"/>
<path d="M304.300 28V19.500" stroke="#000" stroke-width="1.200"/><path d="M301.600 20.200H307L304.300 17.200Z" fill="#000"/>
<!-- lock -->
<path d="M567.800 17C567.300 14.500 569.500 13.600 571.500 14.200C573.500 14.800 574.600 17 574.700 19" fill="none" stroke="#111" stroke-width="1.400"/>
<path d="M566 20.700L574.400 19L576.300 25L567.700 27Z" fill="#f0e484" stroke="#111" stroke-width="1.300"/>
<path d="M570.600 21.300c1 0 1.300 1.200.6 1.700l.3 1.600h-1.500l.2-1.600c-.8-.5-.5-1.700.4-1.700z" fill="#111"/>
<!-- transform icons -->
<g transform="translate(0 0)"><path d="M727 25H734" stroke="#000" stroke-width="1.200" stroke-dasharray="1.300 1.300"/><path d="M734.600 22.300L738.300 25L734.600 27.700Z" fill="#000"/><path d="M732 25H735" stroke="#000" stroke-width="1.200"/></g><g transform="translate(26.5 0)"><path d="M727 25H734" stroke="#000" stroke-width="1.200" stroke-dasharray="1.300 1.300"/><path d="M734.600 22.300L738.300 25L734.600 27.700Z" fill="#000"/><path d="M732 25H735" stroke="#000" stroke-width="1.200"/></g><g transform="translate(52.5 0)"><path d="M727 25H734" stroke="#000" stroke-width="1.200" stroke-dasharray="1.300 1.300"/><path d="M734.600 22.300L738.300 25L734.600 27.700Z" fill="#000"/><path d="M732 25H735" stroke="#000" stroke-width="1.200"/></g><g transform="translate(78.5 0)"><path d="M727 25H734" stroke="#000" stroke-width="1.200" stroke-dasharray="1.300 1.300"/><path d="M734.600 22.300L738.300 25L734.600 27.700Z" fill="#000"/><path d="M732 25H735" stroke="#000" stroke-width="1.200"/></g>
<path d="M725.200 15.200H737.200V20.600" fill="none" stroke="#000" stroke-width="2"/>
<path d="M725.200 19.300H733.100V22.200" fill="none" stroke="#000" stroke-width="1.200"/>
<path d="M751 14.500H756C761 14.500 764.500 16.500 764.500 20.600" fill="none" stroke="#000" stroke-width="1.300"/>
<path d="M751 18.300H755C758.500 18.300 760.500 19.500 760.500 22.200" fill="none" stroke="#000" stroke-width="1.300"/>
<path d="M777.200 14.700H790.300V20.600H786.500V22.300H777.200Z" fill="url(#tBl2)"/>
<path d="M777.200 14.900H790V20.600" fill="none" stroke="#000" stroke-width="1.500"/>
<path d="M777.200 18.600H785.800V22.200" fill="none" stroke="#000" stroke-width="1.200"/>
<rect x="803" y="14.200" width="14" height="7" fill="#000"/>
<g fill="#fff"><path d="M806.500 14.200l2 1.700-2 1.700-2-1.700zM811.500 14.200l2 1.700-2 1.700-2-1.700zM816.200 14.200l.8.700v2l-.8.700-2-1.700zM804 17.600l2 1.700-2 1.700-1-.8v-1.800zM809 17.600l2 1.700-2 1.700-2-1.700zM814 17.600l2 1.700-2 1.700-2-1.700z"/></g>
</svg>

<div id="toolbox"></div>
<div id="selbtn"></div>
<svg id="tools" width="36" height="696" viewBox="0 0 36 696" style="left:0;top:0">
<defs>
<linearGradient id="gB" x1="0" y1="0" x2="1" y2="1"><stop offset="0" stop-color="#fff"/><stop offset="1" stop-color="#8fb0cc"/></linearGradient>
<linearGradient id="gP" x1="0" y1="0" x2="1" y2="1"><stop offset="0" stop-color="#fff"/><stop offset="1" stop-color="#f7a8b2"/></linearGradient>
<linearGradient id="gS" x1="0" y1="0" x2="1" y2="1"><stop offset="0" stop-color="#fbe3d8"/><stop offset="1" stop-color="#f2b8a2"/></linearGradient>
<linearGradient id="gW" x1="0" y1="0" x2="0" y2="1"><stop offset="0" stop-color="#666"/><stop offset="1" stop-color="#d8d8d8"/></linearGradient>
<linearGradient id="gG" x1="1" y1="0" x2="0" y2="1"><stop offset="0" stop-color="#4aa352"/><stop offset=".5" stop-color="#9ed0a2"/><stop offset="1" stop-color="#f0f8f0"/></linearGradient>
<linearGradient id="gL" x1="0" y1="0" x2="1" y2="1"><stop offset="0" stop-color="#c8dcec"/><stop offset=".5" stop-color="#f4f8fc"/><stop offset="1" stop-color="#c0d4e6"/></linearGradient>
<linearGradient id="gBk" x1="0" y1="0" x2="1" y2="1"><stop offset="0" stop-color="#a8d0e0"/><stop offset="1" stop-color="#2a5a90"/></linearGradient>
<linearGradient id="gC1" x1="0" y1="0" x2="1" y2="1"><stop offset="0" stop-color="#b4b4e0"/><stop offset="1" stop-color="#5a58a0"/></linearGradient>
<linearGradient id="gN" x1="0" y1="0" x2="1" y2="1"><stop offset="0" stop-color="#e4eef6"/><stop offset="1" stop-color="#9ab8d4"/></linearGradient>
</defs>
<!-- selector -->
<path d="M10.400 43.600V62.200L14.400 58.700L16.900 64.100L20.200 62.500L17.600 56.500L22.300 56.200Z" fill="#000" stroke="#fff" stroke-width="1.800" stroke-linejoin="round" paint-order="stroke"/>
<!-- node -->
<path d="M26.500 74.300C18 74.300 12 76 11.400 78.500C8 82 7.600 88 7.600 93.300" fill="none" stroke="#555" stroke-width="1"/>
<rect x="8.300" y="75.300" width="6.200" height="6.200" fill="#2a2ae8" stroke="#1010ff" stroke-width="1"/>
<rect x="24.500" y="72.500" width="4" height="4" fill="#b8b8f4" stroke="#4040ff" stroke-width="1"/>
<rect x="5.500" y="91.500" width="4" height="4" fill="#b8b8f4" stroke="#4040ff" stroke-width="1"/>
<path d="M13 80.500L26.200 88.300L20.800 94.200Z" fill="#000"/>
<!-- tweak -->
<path d="M6.200 124.200V117C12 116 13 109 16 105.500C19 102.500 24 103 25 106.500C25.500 109 22 110 21.500 108C19 108 19 113 22 114.500C24 115.500 27.600 115 27.600 117V124.200Z" fill="url(#gW)"/>
<path d="M6.200 117C12 116 13 109 16 105.500C19 102.500 24 103 25 106.500C25.500 109 22 110 21.500 108C19 108 19 113 22 114.500C24 115.500 27.600 115 27.600 116.500" fill="none" stroke="#222" stroke-width="1.400"/>
<!-- zoom -->
<path d="M19.500 146.500L26.500 153" stroke="#3a2a10" stroke-width="5.500" stroke-linecap="round"/>
<path d="M20.500 147.500L26.300 152.800" stroke="#f2a010" stroke-width="3.500" stroke-linecap="round"/>
<circle cx="13.100" cy="139.700" r="7.500" fill="url(#gL)" stroke="#111" stroke-width="1.300"/>
<!-- measure -->
<path d="M5.300 168L14.500 162.600L24.800 179.300L14.600 184.800Z" fill="url(#gS)" stroke="#111" stroke-width="1.200"/>
<path d="M7 170.800l2.200-1.200M8.600 173.500l2.200-1.200M10.200 176.200l3-1.600M11.800 178.900l2.200-1.200M13.400 181.600l2.200-1.200" stroke="#111" stroke-width="1"/>
<!-- rect -->
<rect x="7.700" y="194.700" width="19" height="19" fill="url(#gB)" stroke="#111" stroke-width="1"/>
<rect x="8.700" y="195.700" width="17" height="17" fill="none" stroke="#fff" stroke-width="1"/>
<!-- 3d box -->
<path d="M7.200 227.700L17.900 221.800L26.900 229.800V240.800L16.500 245.200L7.200 238.800Z" fill="#cfcff0" stroke="#555" stroke-width="1"/>
<path d="M7.200 227.700L17.900 221.800L18.600 235.300L7.200 238.800Z" fill="url(#gC1)"/>
<path d="M17.900 221.800L26.900 229.800V240.800L18.600 235.300Z" fill="#dcdcf6"/>
<path d="M7.200 238.800L18.600 235.300L26.900 240.800L16.500 245.200Z" fill="#2c2c86"/>
<path d="M7.200 227.700L17.900 221.800L26.900 229.800V240.800L16.500 245.200L7.200 238.800Z" fill="none" stroke="#666" stroke-width="1.200"/>
<!-- circle -->
<circle cx="16.800" cy="263.600" r="9.400" fill="url(#gP)" stroke="#111" stroke-width="1.300"/>
<!-- star -->
<path d="M12.800 283.500L19.800 288.600L17.200 298.300H8.200L5.600 288.800Z" fill="#ece6a0" stroke="#333" stroke-width="1.200"/>
<path d="M20.700 288.500L23.200 293.700L28.800 294.500L24.700 298.400L25.700 304L20.700 301.300L15.700 304L16.700 298.400L12.600 294.500L18.200 293.700Z" fill="#f2e66a" stroke="#333" stroke-width="1.200"/>
<!-- spiral -->
<path d="M16.200 326.500C15 324 12.500 326 13.500 328.500C15 331.500 20 330.500 21 326.500C22 321.500 17 318 12.500 319.500C6.500 321.500 5 329 9 333C14 338 24 335.500 26.500 328C29 320 23 313 14.500 313.500" fill="none" stroke="#111" stroke-width="1.300"/>
<!-- pencil -->
<path d="M6.500 345H11L6.500 353.500H10.500C14 353.500 13.500 357 13 359.500C12.500 363 14 364.500 18 364.500C22 364.500 25 363 25.800 360.500" fill="none" stroke="#111" stroke-width="1.300"/>
<path d="M17.200 362.500L16.800 354.500L22 342.500L27.500 346L22.500 357.500Z" fill="#fff" stroke="#111" stroke-width="1"/>
<path d="M18.500 351L22 342.500L27.500 346L24 354.200Z" fill="#f6b414"/>
<path d="M22 342.500L24.800 344.300L21.200 352.500L18.500 351Z" fill="#fbe14a"/>
<path d="M17.200 362.500L17 358.500L20 360Z" fill="#111"/>
<!-- pen -->
<path d="M6.600 373.700H18C16 380 17 389 11.500 393.500" fill="none" stroke="#111" stroke-width="1.200"/>
<path d="M9 393.700H17" stroke="#111" stroke-width="1"/>
<rect x="5.500" y="391.500" width="4" height="4.300" fill="#fff" stroke="#111" stroke-width="1"/>
<rect x="16" y="393" width="1.800" height="1.800" fill="#fff" stroke="#111" stroke-width=".8"/>
<path d="M17.200 393L18.500 386L21.500 384.500L23.800 386.500L17.200 393Z" fill="#ddd" stroke="#111" stroke-width="1"/>
<path d="M19.500 383L22 377.500L27 382L23.500 386.500Z" fill="#f2c040" stroke="#222" stroke-width=".8"/>
<path d="M20.700 378.500L23.500 371.500L28.300 376L27.600 383.500L24 386Z" fill="url(#gBk)" stroke="#1c3c60" stroke-width=".8"/>
<!-- calligraphy -->
<path d="M5.300 402.300C9 401.800 13.800 403 13.600 408.500C13.400 413 10.700 416.500 11.700 420C12.400 422.600 15.500 423 18.500 422.300C22 421.500 25 420.300 28 421.800C24.500 421.500 21.500 423.500 17.800 424.600C12.500 426 6.600 425 6.200 419.500C5.800 414.500 9.300 411.500 9 407C8.800 404.300 7.500 403.200 5.300 402.300Z" fill="#111"/>
<path d="M16.300 422.300C16.300 416 18.500 411.500 21.500 409L26 412C25.500 416.500 21.500 420.500 16.300 422.300Z" fill="#f6d84a" stroke="#111" stroke-width="1.300"/>
<path d="M16.800 421.500L21 415" stroke="#111" stroke-width="1"/>
<circle cx="21.200" cy="414.800" r="1" fill="#111"/>
<path d="M20.700 408.500L22.500 403L28.500 405.500L26.500 411.500Z" fill="#5aa0c4" stroke="#223" stroke-width=".8"/>
<path d="M21 407.500L26.800 410.500L26.300 411.800L20.600 408.800Z" fill="#d42020"/>
<!-- text tool -->
<text x="15.400" y="452.600" font-family="Liberation Sans, sans-serif" font-weight="bold" font-size="25.500" text-anchor="middle" fill="#111" stroke="#111" stroke-width=".5">A</text>
<path d="M23.500 432.800h2.300M26 432.800h2.300M23.500 455h2.300M26 455h2.300M25.900 433v22" stroke="#111" stroke-width="1" fill="none"/>
<!-- spray -->
<g fill="#111"><circle cx="8.300" cy="464.500" r="1"/><circle cx="11.500" cy="466" r=".9"/><circle cx="7.500" cy="468.500" r=".9"/><circle cx="10.500" cy="469.700" r="1"/><circle cx="13.500" cy="468.500" r=".8"/><circle cx="9" cy="473.500" r="1.100"/><circle cx="12.500" cy="472.500" r=".8"/><circle cx="14.500" cy="471" r=".7"/></g>
<path d="M17 474.500L26.500 473.500L28.500 478V484L20 483.500Z" fill="#4a9c2c" stroke="#1c4c10" stroke-width="1"/>
<path d="M19 476L22 475.600L23.500 483L21 482.800Z" fill="#a8dc80"/>
<path d="M17.500 473.800L18.500 470.500C20 467.500 24 467.200 25.500 469.500L26.500 473Z" fill="#f4f4f4" stroke="#333" stroke-width="1"/>
<path d="M17.800 473L26.300 472" stroke="#e8b020" stroke-width="1.600"/>
<!-- eraser -->
<path d="M17.200 492.300L25.900 498.700L16.300 514.300L7.300 508Z" fill="url(#gS)" stroke="#111" stroke-width="1.200"/>
<!-- bucket -->
<ellipse cx="15.200" cy="543.300" rx="10.200" ry="2.600" fill="#9cd8a0" stroke="#2a6a34" stroke-width="1"/>
<path d="M9 529C9.500 526 22 521.500 24.300 522.700L27.800 533.500C26 536.500 17 539.500 14.300 538.800Z" fill="url(#gBk)" stroke="#123" stroke-width="1.100"/>
<path d="M9 529C8.500 531 11 537 12.500 541C13 543 16 543 15.500 541C15 539.500 14.500 539 14.300 538.800C12 534 10.500 530 9 529Z" fill="#8ed094" stroke="#2a6a34" stroke-width=".9"/>
<path d="M11 527.500C11 524 13 522 13.800 523C14.800 525 15.500 530 16 532.500" fill="none" stroke="#222" stroke-width="1"/>
<circle cx="16" cy="532.800" r="1.200" fill="#ccc" stroke="#222" stroke-width=".7"/>
<!-- gradient -->
<rect x="6.300" y="553.200" width="21.400" height="21.300" fill="url(#gG)"/>
<path d="M11 558.500L23 569" stroke="#111" stroke-width="1.300"/>
<rect x="9" y="556.400" width="4.200" height="4.200" fill="#eee" stroke="#111" stroke-width="1.100"/>
<rect x="20.800" y="566.800" width="4.600" height="4.600" fill="#eee" stroke="#111" stroke-width="1.100"/>
<!-- dropper -->
<path d="M21.500 589.500L12 598.500L11.300 600L12.800 599.500L22.800 591Z" fill="#b8d4ec" stroke="#345" stroke-width="1"/>
<path d="M20 587.500C21 586 22.500 585 23.500 585.500C23.500 583 27 581 28.600 583C30 585 28 588.500 25.500 588.500C26 590 25 591.500 23.500 592.500Z" fill="#111"/>
<path d="M10.300 601.200C9 603 9 605 10.300 605.200C11.600 605 11.600 603 10.300 601.200Z" fill="#8fb8e0" stroke="#345" stroke-width=".8"/>
<!-- connector -->
<path d="M18.600 615L24.800 619V628.500M11.500 619L9 628.500" fill="none" stroke="#111" stroke-width="1.100"/>
<rect x="10.500" y="612.300" width="8" height="7" fill="url(#gN)" stroke="#111" stroke-width="1.100"/>
<rect x="5.500" y="628.500" width="8.200" height="7" fill="url(#gN)" stroke="#111" stroke-width="1.100"/>
<rect x="20.500" y="628.500" width="8.200" height="7" fill="url(#gN)" stroke="#111" stroke-width="1.100"/>
<rect x="13.300" y="621.700" width="8" height="4.600" fill="#f8d048" stroke="#111" stroke-width="1.100"/>
</svg>
<div id="vscroll"><i></i></div>
<svg id="zoom11" width="22" height="22" viewBox="0 0 22 22"><line x1="14" y1="14.500" x2="18.500" y2="19" stroke="#444" stroke-width="2.6" stroke-linecap="round"/><circle cx="9.2" cy="9.7" r="6.6" fill="#f4f4f4" stroke="#555" stroke-width="1.3"/><text x="9.2" y="12.4" font-size="7" font-weight="bold" text-anchor="middle" fill="#666" font-family="Liberation Sans, sans-serif">1:1</text></svg>
<div id="dshadow"></div>
<div id="dlg">
<div id="dtop"></div>
<div id="dline"></div>
<div id="dleft"></div>
<div id="dvline"></div>
<svg id="dicon" width="16" height="16" viewBox="0 0 16 16"><path d="M1.300 13.500V1.300H13.500L1.300 13.500Z" fill="#f8f8f8"/><path d="M1.300 13V1.300H12" fill="none" stroke="#111" stroke-width="1.600"/><path d="M12.200 2.800C9.500 6 7.500 9 5.500 11C4 12.500 2.200 13.600.6 13.800" fill="none" stroke="#111" stroke-width="2.600" stroke-linecap="round"/><path d="M10.500 2.500L13.600 0.200L14.400 3.600L12.800 5Z" fill="#f0b818"/></svg>
<div id="dtitle">Füllung und Kontur (Umschalt+Strg+F)</div>
<div id="dcollapse"><svg width="11" height="11" viewBox="0 0 11 11"><rect x=".6" y=".6" width="9.8" height="9.8" rx="2" fill="#f4f4f4" stroke="#666" stroke-width="1.2"/><path d="M7.6 2.8v5.4L3 5.5z" fill="#777"/></svg></div>
<svg id="dclose" width="11" height="11" viewBox="0 0 11 11"><rect x=".6" y=".6" width="9.8" height="9.8" rx="2" fill="#f4f4f4" stroke="#666" stroke-width="1.2"/><path d="M3 3l5 5M8 3l-5 5" stroke="#555" stroke-width="2.2"/></svg>
<div id="dunder"></div>
<div id="tab1"><i></i><span><u>F</u>üllen</span></div>
<div id="tab3"><svg width="16" height="14" viewBox="0 0 16 14"><path d="M1 3.5h11M1 11.5h13" stroke="#333" stroke-width="1.2"/><path d="M1 7.5h13" stroke="#333" stroke-width="1.2" stroke-dasharray="2 1.5"/><path d="M10.5 1l4 2.5-4 2.5z" fill="#222"/></svg><span><u>M</u>uster der Kontur</span></div>
<div id="panel"></div>
<div id="tab2"><i></i><span><u>F</u>arbe der Kontur</span></div>
<div id="xbox"><div id="xbtn"><div id="xfocus"></div><svg width="12" height="12" viewBox="0 0 12 12"><path d="M2 2l8 8M10 2l-8 8" stroke="#000" stroke-width="2.4"/></svg></div></div>
<div class="sw" style="left:54px;background:#8fb0d8"></div>
<div class="sw" style="left:84px;background:linear-gradient(225deg,#f4f8fc 5%,#8fb0d8 95%)"></div>
<div class="sw" style="left:114px;background:radial-gradient(circle at 50% 55%,#fff 0,#8fb0d8 80%)"></div>
<div class="sw" style="left:144px;background:#8fb0d8;overflow:hidden"><svg width="18" height="18" viewBox="0 0 18 18" style="position:absolute;left:0;top:0"><g fill="#f2f6fb"><path d="M4.5 0l4.5 4.5-4.5 4.5L0 4.5z"/><path d="M13.5 0l4.5 4.5-4.5 4.5L9 4.5z"/><path d="M4.5 9l4.5 4.5-4.5 4.5L0 13.500z"/><path d="M13.5 9l4.500 4.500-4.500 4.500L9 13.500z"/></g></svg></div>
<div class="sw" style="left:174px;background:#fff;box-shadow:inset -2px -2px 0 0 #7f96c0"></div>
<div id="qm">?</div>
<div id="keine">Keine Farbe</div>
<div class="sbox" style="top:351px"><span>Unschärfe (%)</span><em>0,0</em></div>
<div class="spin" style="left:324px;top:351px;width:10px;height:23px"><i class="up"></i><i class="dn g"></i></div>
<div class="sbox" style="top:379px"><div id="dfill"></div><span>Deckkraft (%)</span><em>100,0</em></div>
<div class="spin" style="left:324px;top:379px;width:10px;height:23px"><i class="up g"></i><i class="dn"></i></div>
<div id="dbot"></div>
</div>

<div id="brk"></div>
</body></html>
